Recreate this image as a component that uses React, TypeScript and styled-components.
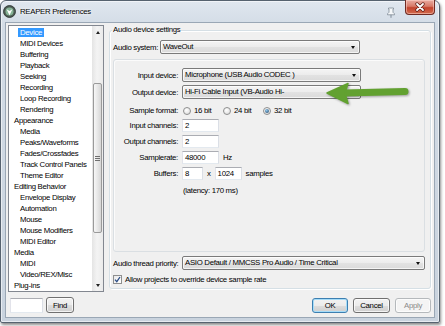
import styled, { createGlobalStyle } from "styled-components";

const GlobalStyle = createGlobalStyle`
  html, body {
    margin: 0;
    padding: 0;
    background: #ffffff;
  }
  body {
    font-family: "Liberation Sans", Arial, sans-serif;
    font-size: 7.8px;
    letter-spacing: -0.3px;
    color: #000;
  }
  * {
    box-sizing: border-box;
  }
`;

const Stage = styled.div`
  position: relative;
  width: 445px;
  height: 326px;
  overflow: hidden;
`;

const Window = styled.div`
  width: 440px;
  height: 323px;
  display: flex;
  flex-direction: column;
  padding: 0 4px 4px;
  border: 1px solid #56626f;
  border-radius: 6px 6px 2px 2px;
  background: linear-gradient(180deg, #e0e7ef 0px, #d3dce6 24px, #c9d3de 100%);
  box-shadow: 1px 2px 3px rgba(0, 0, 0, 0.45), inset 0 0 0 1px rgba(255, 255, 255, 0.55);
`;

const TitleBar = styled.div`
  height: 21px;
  flex: none;
  display: flex;
  align-items: center;
`;

const AppIcon = styled.svg`
  width: 13px;
  height: 13px;
  margin-left: -2px;
  margin-top: -1px;
  flex: none;
`;

const Title = styled.span`
  margin-left: 4px;
  margin-top: -1px;
  text-shadow: 0 0 5px #fff, 0 0 2px #fff;
`;

const PinIcon = styled.svg`
  margin-left: auto;
  margin-right: 9px;
  margin-top: 2px;
  width: 10px;
  height: 11px;
  flex: none;
`;

const CloseButton = styled.div`
  align-self: flex-start;
  margin-top: -1px;
  width: 30px;
  height: 15px;
  flex: none;
  display: flex;
  align-items: center;
  justify-content: center;
  border: 1px solid #6f2a22;
  border-top: none;
  border-radius: 0 0 4px 4px;
  background: linear-gradient(180deg, #e9aca2 0%, #d77a68 45%, #c2432d 55%, #d26c4f 100%);
  box-shadow: inset 0 0 0 1px rgba(255, 220, 210, 0.5);
`;

const Client = styled.div`
  flex: 1;
  display: grid;
  grid-template-columns: 96px 322px;
  grid-template-rows: 267px 16px;
  column-gap: 5px;
  row-gap: 5px;
  padding: 2px 3px 0 2px;
  background: #f0f0f0;
  border: 1px solid #9aa7b5;
`;

/* ---- page list ---- */

const PageList = styled.div`
  display: flex;
  background: #fff;
  border: 1px solid #828790;
  overflow: hidden;
`;

const ListItems = styled.ul`
  flex: 1;
  min-width: 0;
  margin: 0;
  padding: 1px 0 0;
  list-style: none;
`;

const ListItem = styled.li<{ $indent: boolean }>`
  height: 11px;
  line-height: 11px;
  padding-left: ${(p) => (p.$indent ? 9 : 3)}px;
  white-space: nowrap;
`;

const ItemLabel = styled.span<{ $selected?: boolean }>`
  display: inline-block;
  vertical-align: top;
  margin-top: 1px;
  height: 9px;
  line-height: 9px;
  padding: 0 2px;
  background: ${(p) => (p.$selected ? "#3399ff" : "transparent")};
  color: ${(p) => (p.$selected ? "#fff" : "#000")};
`;

const ScrollBar = styled.div`
  width: 11px;
  flex: none;
  display: flex;
  flex-direction: column;
  background: linear-gradient(90deg, #e4e4e4, #f3f3f3 45%, #ebebeb);
`;

const ScrollArrow = styled.div<{ $dir: "up" | "down" }>`
  height: 12px;
  flex: none;
  display: flex;
  align-items: center;
  justify-content: center;
  &::before {
    content: "";
    border-left: 2.5px solid transparent;
    border-right: 2.5px solid transparent;
    ${(p) =>
      p.$dir === "up"
        ? "border-bottom: 3px solid #222;"
        : "border-top: 3px solid #222;"}
  }
`;

const ScrollTrack = styled.div`
  flex: 1;
  padding: 0 1px;
`;

const ScrollThumb = styled.div<{ $offset: number; $size: number }>`
  margin-top: ${(p) => p.$offset}px;
  height: ${(p) => p.$size}px;
  border: 1px solid #9a9a9a;
  border-radius: 2px;
  background: linear-gradient(90deg, #f7f7f7, #e6e6e6 55%, #d6d6d6);
  display: flex;
  align-items: center;
  justify-content: center;
`;

const Grip = styled.div`
  width: 5px;
  height: 5px;
  background: repeating-linear-gradient(180deg, #6f6f6f 0 1px, transparent 1px 2px);
`;

/* ---- settings ---- */

const Group = styled.fieldset`
  align-self: start;
  margin: 0;
  min-width: 0;
  padding: 0 5px 4px 3px;
  border: 1px solid #d5dfe5;
  border-radius: 3px;
  box-shadow: inset 1px 1px 0 #fff, 1px 1px 0 #fff;
`;

const GroupTitle = styled.legend`
  margin-left: -1px;
  padding: 0 1px;
  line-height: 10px;
`;

const DeviceBox = styled.div`
  height: 193px;
  margin-top: 5px;
  padding-top: 8px;
  display: flex;
  flex-direction: column;
  border: 1px solid #dadfe3;
  border-radius: 3px;
  box-shadow: inset 1px 1px 0 #fbfbfb;
`;

const FormRow = styled.div<{ $h: number; $mt?: number }>`
  display: flex;
  align-items: center;
  gap: 4px;
  height: ${(p) => p.$h}px;
  margin-top: ${(p) => p.$mt ?? 0}px;
  white-space: nowrap;
`;

const RowLabel = styled.span<{ $w?: number; $left?: boolean }>`
  flex: none;
  width: ${(p) => p.$w ?? 64}px;
  text-align: ${(p) => (p.$left ? "left" : "right")};
`;

const Select = styled.div<{ $w: number }>`
  position: relative;
  flex: none;
  width: ${(p) => p.$w}px;
  height: 14px;
  line-height: 12px;
  padding-left: 2px;
  border: 1px solid #7a7a7a;
  border-radius: 2px;
  background: linear-gradient(180deg, #f4f4f4 0%, #ececec 50%, #e2e2e2 51%, #dadada 100%);
  box-shadow: inset 0 0 0 1px rgba(255, 255, 255, 0.7);
  overflow: hidden;
  &::after {
    content: "";
    position: absolute;
    right: 4px;
    top: 5px;
    border-left: 2.5px solid transparent;
    border-right: 2.5px solid transparent;
    border-top: 3px solid #111;
  }
`;

const TextField = styled.div<{ $w: number }>`
  flex: none;
  width: ${(p) => p.$w}px;
  height: 13px;
  line-height: 11px;
  padding-left: 2px;
  background: #fff;
  border: 1px solid;
  border-color: #abadb3 #dbdfe6 #e3e9ef #e2e3ea;
`;

const RadioGroup = styled.div`
  display: flex;
  padding-left: 1px;
`;

const RadioOption = styled.label`
  width: 40px;
  display: flex;
  align-items: center;
  gap: 3px;
`;

const RadioDot = styled.span<{ $checked?: boolean }>`
  width: 8px;
  height: 8px;
  flex: none;
  display: flex;
  align-items: center;
  justify-content: center;
  border: 1px solid #8e8f8f;
  border-radius: 50%;
  background: radial-gradient(circle at 40% 35%, #ffffff, #d8d8d8);
  &::after {
    content: "";
    width: 4px;
    height: 4px;
    border-radius: 50%;
    background: ${(p) =>
      p.$checked ? "radial-gradient(circle at 40% 35%, #8fc8ee, #1d3f60)" : "transparent"};
  }
`;

const Note = styled.span`
  padding-left: 1px;
`;

const CheckRow = styled.label`
  display: flex;
  align-items: center;
  gap: 3px;
  height: 9px;
  margin-top: 5px;
  white-space: nowrap;
`;

const CheckBox = styled.span`
  width: 9px;
  height: 9px;
  flex: none;
  display: flex;
  align-items: center;
  justify-content: center;
  border: 1px solid #8e8f8f;
  background: linear-gradient(135deg, #e9e9e9, #ffffff);
`;

/* ---- bottom rows ---- */

const FindRow = styled.div`
  display: flex;
  align-items: center;
  gap: 3px;
  padding-left: 2px;
`;

const FindInput = styled.div`
  width: 33px;
  height: 15px;
  background: #fff;
  border: 1px solid;
  border-color: #abadb3 #dbdfe6 #e3e9ef #e2e3ea;
`;

const ButtonRow = styled.div`
  display: flex;
  justify-content: flex-end;
  align-items: center;
  gap: 5px;
`;

const PushButton = styled.button<{ $w: number; $h?: number; $kind?: "default" | "disabled" }>`
  width: ${(p) => p.$w}px;
  height: ${(p) => p.$h ?? 15}px;
  padding: 0;
  font: inherit;
  letter-spacing: inherit;
  color: ${(p) => (p.$kind === "disabled" ? "#8a8a8a" : "#000")};
  border: 1px solid
    ${(p) => (p.$kind === "default" ? "#3c7fb1" : p.$kind === "disabled" ? "#b5b9bc" : "#707070")};
  border-radius: 3px;
  background: ${(p) =>
    p.$kind === "disabled"
      ? "#f4f4f4"
      : "linear-gradient(180deg, #f2f2f2 0%, #ebebeb 50%, #dddddd 51%, #cfcfcf 100%)"};
  box-shadow: inset 0 0 0 1px
    ${(p) => (p.$kind === "default" ? "#a6dcf8" : "rgba(255, 255, 255, 0.75)")};
`;

const Annotation = styled.svg`
  position: absolute;
  left: 324px;
  top: 81px;
  width: 86px;
  height: 26px;
  filter: drop-shadow(1px 1.5px 1px rgba(0, 0, 0, 0.35));
`;

type Page = { label: string; indent: boolean; selected?: boolean };

const pages: Page[] = [
  { label: "Device", indent: true, selected: true },
  { label: "MIDI Devices", indent: true },
  { label: "Buffering", indent: true },
  { label: "Playback", indent: true },
  { label: "Seeking", indent: true },
  { label: "Recording", indent: true },
  { label: "Loop Recording", indent: true },
  { label: "Rendering", indent: true },
  { label: "Appearance", indent: false },
  { label: "Media", indent: true },
  { label: "Peaks/Waveforms", indent: true },
  { label: "Fades/Crossfades", indent: true },
  { label: "Track Control Panels", indent: true },
  { label: "Theme Editor", indent: true },
  { label: "Editing Behavior", indent: false },
  { label: "Envelope Display", indent: true },
  { label: "Automation", indent: true },
  { label: "Mouse", indent: true },
  { label: "Mouse Modifiers", indent: true },
  { label: "MIDI Editor", indent: true },
  { label: "Media", indent: false },
  { label: "MIDI", indent: true },
  { label: "Video/REX/Misc", indent: true },
  { label: "Plug-ins", indent: false },
];

const formats = ["16 bit", "24 bit", "32 bit"];

export default function App() {
  return (
    <>
      <GlobalStyle />
      <Stage>
        <Window>
          <TitleBar>
            <AppIcon viewBox="0 0 13 13">
              <circle cx="6.5" cy="6.5" r="6" fill="#4d5b54" stroke="#27302b" strokeWidth="0.8" />
              <circle cx="6.5" cy="6.5" r="4" fill="#86b496" />
              <path d="M3.6 4.2 L6.5 10.2 L9.4 4.2 L6.5 6 Z" fill="#ffffff" />
            </AppIcon>
            <Title>REAPER Preferences</Title>
            <PinIcon viewBox="0 0 10 11">
              <path
                d="M2.5 1h5v1H7v3.3l1.5 1.5v1h-7v-1L3 5.3V2h-.5z"
                fill="#f6f8fa"
                stroke="#7f8a96"
                strokeWidth="0.8"
              />
              <path d="M5 7.8v3" stroke="#7f8a96" strokeWidth="1" />
            </PinIcon>
            <CloseButton>
              <svg width="12" height="10" viewBox="0 0 12 10">
                <path d="M3 2 L9 8 M9 2 L3 8" stroke="#5a1d16" strokeWidth="3.2" strokeLinecap="round" />
                <path d="M3 2 L9 8 M9 2 L3 8" stroke="#ffffff" strokeWidth="1.8" strokeLinecap="round" />
              </svg>
            </CloseButton>
          </TitleBar>

          <Client>
            <PageList>
              <ListItems>
                {pages.map((page, i) => (
                  <ListItem key={i} $indent={page.indent}>
                    <ItemLabel $selected={page.selected}>{page.label}</ItemLabel>
                  </ListItem>
                ))}
              </ListItems>
              <ScrollBar>
                <ScrollArrow $dir="up" />
                <ScrollTrack>
                  <ScrollThumb $offset={45} $size={150}>
                    <Grip />
                  </ScrollThumb>
                </ScrollTrack>
                <ScrollArrow $dir="down" />
              </ScrollBar>
            </PageList>

            <Group>
              <GroupTitle>Audio device settings</GroupTitle>
              <FormRow $h={14} $mt={5}>
                <RowLabel $w={43} $left>
                  Audio system:
                </RowLabel>
                <Select $w={200}>WaveOut</Select>
              </FormRow>

              <DeviceBox>
                <FormRow $h={14}>
                  <RowLabel>Input device:</RowLabel>
                  <Select $w={179}>Microphone (USB Audio CODEC )</Select>
                </FormRow>
                <FormRow $h={14} $mt={3}>
                  <RowLabel>Output device:</RowLabel>
                  <Select $w={179}>Hi-Fi Cable Input (VB-Audio Hi-</Select>
                </FormRow>
                <FormRow $h={13} $mt={5}>
                  <RowLabel>Sample format:</RowLabel>
                  <RadioGroup>
                    {formats.map((f) => (
                      <RadioOption key={f}>
                        <RadioDot $checked={f === "32 bit"} />
                        {f}
                      </RadioOption>
                    ))}
                  </RadioGroup>
                </FormRow>
                <FormRow $h={13} $mt={2}>
                  <RowLabel>Input channels:</RowLabel>
                  <TextField $w={37}>2</TextField>
                </FormRow>
                <FormRow $h={13} $mt={3}>
                  <RowLabel>Output channels:</RowLabel>
                  <TextField $w={37}>2</TextField>
                </FormRow>
                <FormRow $h={13} $mt={3}>
                  <RowLabel>Samplerate:</RowLabel>
                  <TextField $w={37}>48000</TextField>
                  <span>Hz</span>
                </FormRow>
                <FormRow $h={13} $mt={3}>
                  <RowLabel>Buffers:</RowLabel>
                  <TextField $w={21}>8</TextField>
                  <span>x</span>
                  <TextField $w={27}>1024</TextField>
                  <span>samples</span>
                </FormRow>
                <FormRow $h={10} $mt={5}>
                  <RowLabel />
                  <Note>(latency: 170 ms)</Note>
                </FormRow>
              </DeviceBox>

              <FormRow $h={14} $mt={4}>
                <RowLabel $w={65} $left>
                  Audio thread priority:
                </RowLabel>
                <Select $w={243}>ASIO Default / MMCSS Pro Audio / Time Critical</Select>
              </FormRow>
              <CheckRow>
                <CheckBox>
                  <svg width="7" height="7" viewBox="0 0 7 7">
                    <path d="M1 3.6 L2.8 5.6 L6 1" fill="none" stroke="#2a4d86" strokeWidth="1.3" />
                  </svg>
                </CheckBox>
                Allow projects to override device sample rate
              </CheckRow>
            </Group>

            <FindRow>
              <FindInput />
              <PushButton $w={28} $h={16}>
                Find
              </PushButton>
            </FindRow>

            <ButtonRow>
              <PushButton $w={36} $kind="default">
                OK
              </PushButton>
              <PushButton $w={37}>Cancel</PushButton>
              <PushButton $w={36} $kind="disabled">
                Apply
              </PushButton>
            </ButtonRow>
          </Client>
        </Window>

        <Annotation viewBox="0 0 86 26">
          <path d="M20 12 L81 10.6" stroke="#62a130" strokeWidth="7" strokeLinecap="round" />
          <path
            d="M3 12 L24 2.5 L21 12 L24 22.5 Z"
            fill="#62a130"
            strokeLinejoin="round"
            stroke="#62a130"
            strokeWidth="1.5"
          />
        </Annotation>
      </Stage>
    </>
  );
}
